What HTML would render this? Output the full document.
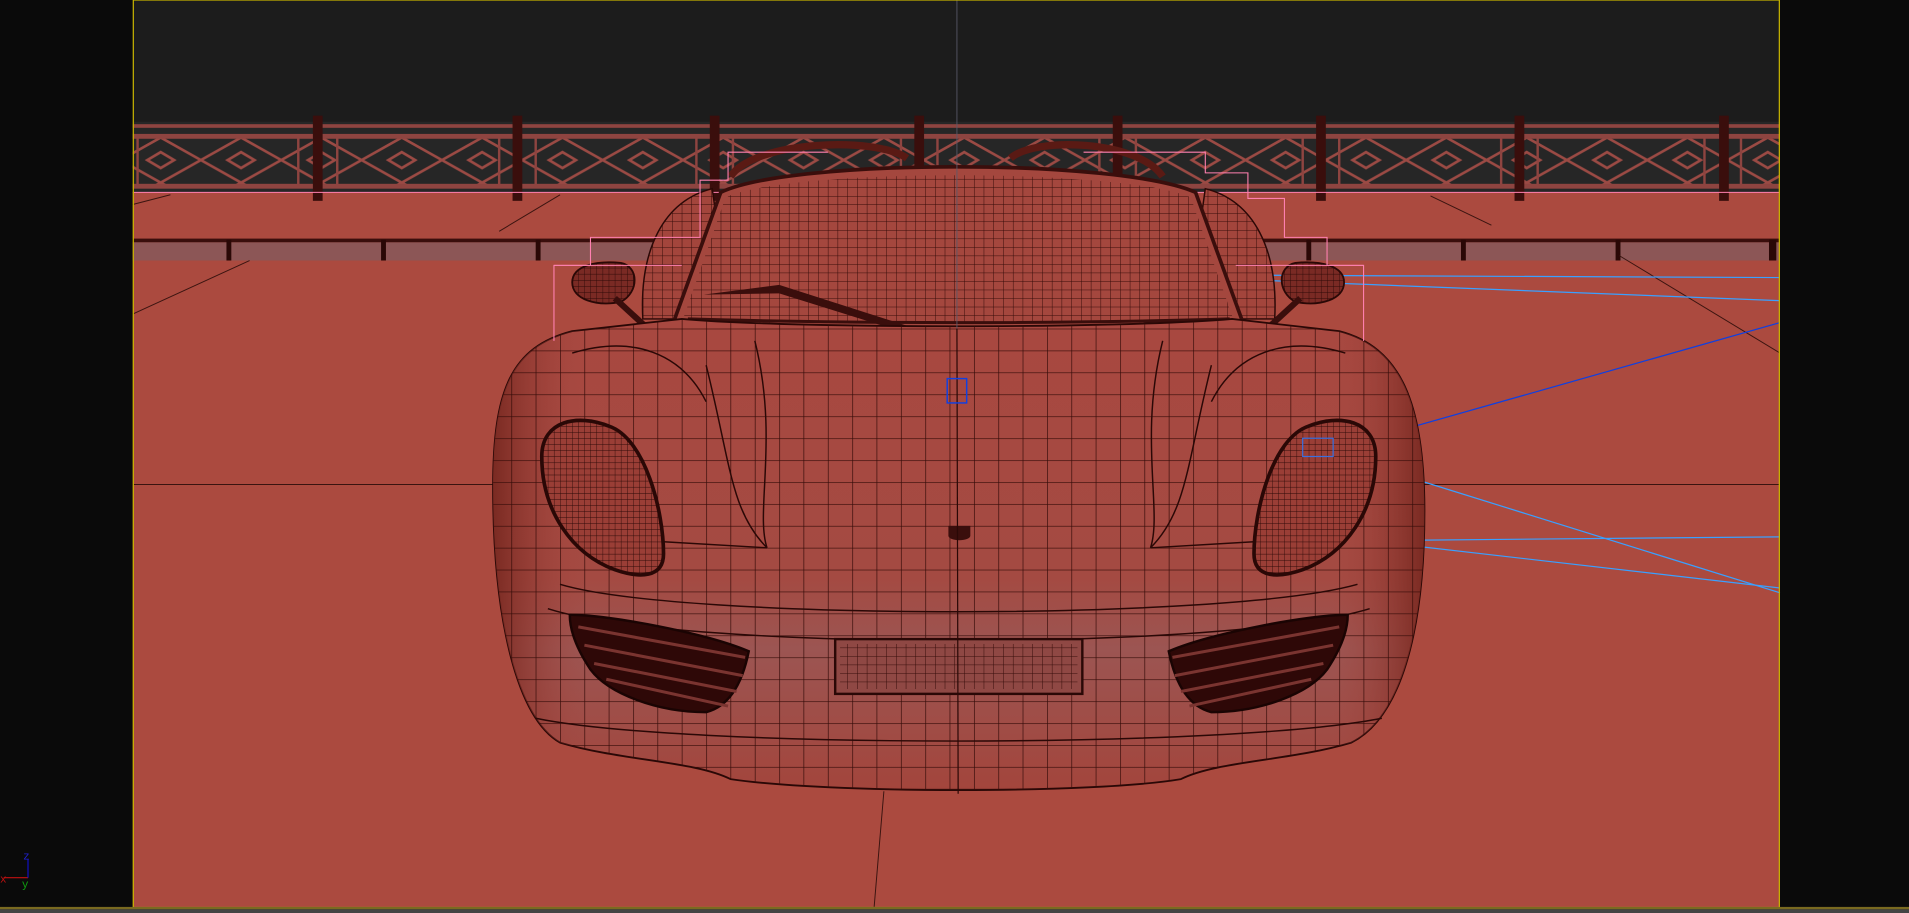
<!DOCTYPE html>
<html><head><meta charset="utf-8"><style>
html,body{margin:0;padding:0;background:#0a0a0a;width:1909px;height:913px;overflow:hidden}
svg{display:block}
</style></head><body>
<svg width="1909" height="913" viewBox="0 0 1568 750" preserveAspectRatio="none" xmlns="http://www.w3.org/2000/svg">
<defs>
<pattern id="mesh" width="20" height="18" patternUnits="userSpaceOnUse">
<path d="M0 0H20M0 0V18" stroke="#340b08" stroke-width="1.1" fill="none"/>
</pattern>
<pattern id="fine" width="8" height="7" patternUnits="userSpaceOnUse">
<path d="M0 0H8M0 0V7" stroke="#340b08" stroke-width="0.8" fill="none"/>
</pattern>
<pattern id="vfine" width="5" height="5" patternUnits="userSpaceOnUse">
<path d="M0 0H5M0 0V5" stroke="#2a0806" stroke-width="0.7" fill="none"/>
</pattern>
<pattern id="lattice" width="66" height="37" patternUnits="userSpaceOnUse" x="33" y="113">
<path d="M0 18.5L33 0L66 18.5L33 37Z M22 18.5L33 12L44 18.5L33 25Z" stroke="#9b4a44" stroke-width="2.2" fill="none"/>
</pattern>
<linearGradient id="shade" x1="0" y1="0" x2="0" y2="1">
<stop offset="0" stop-color="#a84840"/><stop offset="0.55" stop-color="#a44a42"/><stop offset="0.7" stop-color="#9c5552"/><stop offset="1" stop-color="#a3453c"/>
</linearGradient>
<linearGradient id="side" x1="0" y1="0" x2="1" y2="0">
<stop offset="0" stop-color="#7a2a22"/><stop offset="0.1" stop-color="#a84840" stop-opacity="0"/><stop offset="0.9" stop-color="#a84840" stop-opacity="0"/><stop offset="1" stop-color="#7a2a22"/>
</linearGradient>
</defs>
<rect x="0" y="0" width="1568" height="750" fill="#0a0a0a"/>
<rect x="109" y="0" width="1353" height="160" fill="#1c1c1c"/>
<rect x="109" y="100" width="1353" height="60" fill="#262626"/>
<rect x="109" y="158" width="1353" height="588" fill="#ab4a3f"/>
<!-- fence -->
<rect x="109" y="112" width="1353" height="40" fill="url(#lattice)"/>
<rect x="109" y="102" width="1353" height="3" fill="#8e4440"/>
<rect x="109" y="110" width="1353" height="4" fill="#8e4440"/>
<rect x="109" y="151" width="1353" height="4" fill="#8e4440"/>
<g stroke="#8e4440" stroke-width="2">
<path d="M113 112V152M245 112V152M277 112V152M410 112V152M440 112V152M572 112V152M602 112V152M740 112V152M770 112V152M903 112V152M933 112V152M1070 112V152M1100 112V152M1233 112V152M1263 112V152M1400 112V152M1430 112V152"/>
</g>
<g fill="#3a0e0c">
<rect x="257" y="95" width="8" height="70"/><rect x="421" y="95" width="8" height="70"/><rect x="583" y="95" width="8" height="70"/><rect x="751" y="95" width="8" height="70"/><rect x="914" y="95" width="8" height="70"/><rect x="1081" y="95" width="8" height="70"/><rect x="1244" y="95" width="8" height="70"/><rect x="1412" y="95" width="8" height="70"/>
</g>
<line x1="109" y1="158" x2="1462" y2="158" stroke="#ff80b0" stroke-width="0.8"/>
<rect x="109" y="199" width="1353" height="15" fill="#8c5656"/>
<rect x="109" y="196" width="1353" height="3" fill="#3a0e0c"/>
<g fill="#2a0806"><rect x="186" y="197" width="4" height="17"/><rect x="313" y="197" width="4" height="17"/><rect x="440" y="197" width="4" height="17"/><rect x="1073" y="197" width="4" height="17"/><rect x="1200" y="197" width="4" height="17"/><rect x="1327" y="197" width="4" height="17"/><rect x="1453" y="197" width="6" height="17"/></g>
<g stroke="#3a1410" stroke-width="0.8" fill="none">
<line x1="109" y1="168" x2="140" y2="160"/><line x1="109" y1="258" x2="205" y2="214"/>
<line x1="1175" y1="161" x2="1225" y2="185"/><line x1="1330" y1="210" x2="1462" y2="290"/>
<line x1="109" y1="398" x2="405" y2="398"/><line x1="1170" y1="398" x2="1462" y2="398"/>
<line x1="726" y1="650" x2="718" y2="745"/><line x1="410" y1="190" x2="460" y2="160"/>
</g>
<g stroke="#3aa0ff" stroke-width="1" fill="none">
<line x1="1010" y1="226" x2="1462" y2="228"/><line x1="1030" y1="230" x2="1462" y2="247"/>
<line x1="1080" y1="368" x2="1462" y2="487"/><line x1="1135" y1="444" x2="1462" y2="441"/><line x1="1140" y1="446" x2="1462" y2="483"/>
</g>
<line x1="1085" y1="372" x2="1462" y2="265" stroke="#1040e0" stroke-width="1"/>
<!-- rear fenders -->
<path d="M528 262C525 205 545 165 585 155L600 262Z" fill="#a3453c" stroke="#2a0806" stroke-width="1.2"/>
<path d="M528 262C525 205 545 165 585 155L600 262Z" fill="url(#fine)"/>
<path d="M1047 262C1050 205 1030 165 990 155L975 262Z" fill="#a3453c" stroke="#2a0806" stroke-width="1.2"/>
<path d="M1047 262C1050 205 1030 165 990 155L975 262Z" fill="url(#fine)"/>
<path d="M600 145C620 115 720 112 745 130" stroke="#5a1a14" stroke-width="6" fill="none"/>
<path d="M830 130C850 112 935 115 955 145" stroke="#5a1a14" stroke-width="6" fill="none"/>
<!-- windshield -->
<path d="M552 268L592 158C650 130 920 130 982 158L1022 268C900 275 680 275 552 268Z" fill="#a4473e" stroke="#3a0e0c" stroke-width="3"/>
<path d="M560 265L596 162C650 138 920 138 978 162L1014 265Z" fill="url(#fine)"/>
<path d="M565 262C700 266 880 266 1010 262" stroke="#3a0e0c" stroke-width="2.5" fill="none"/>
<path d="M578 242L640 234L765 274L752 276L640 241Z" fill="#3a0e0c"/>
<g fill="#7a2a24" stroke="#2a0806" stroke-width="1.5">
<path d="M470 232C470 218 490 214 510 216C525 219 525 240 510 248C490 252 470 246 470 232Z"/>
<path d="M1104 232C1104 218 1084 214 1064 216C1049 219 1049 240 1064 248C1084 252 1104 246 1104 232Z"/>
</g>
<path d="M470 232C470 218 490 214 510 216C525 219 525 240 510 248C490 252 470 246 470 232Z" fill="url(#vfine)"/>
<path d="M1104 232C1104 218 1084 214 1064 216C1049 219 1049 240 1064 248C1084 252 1104 246 1104 232Z" fill="url(#vfine)"/>
<path d="M505 245L530 268M1068 245L1043 268" stroke="#3a0e0c" stroke-width="5"/>
<!-- body -->
<path d="M405 400C405 320 420 285 470 272L560 262C650 270 920 270 1012 262L1100 272C1150 285 1170 330 1170 420C1170 520 1150 590 1110 610C1060 625 1000 625 970 640C900 652 680 652 600 640C570 625 510 625 460 610C425 590 405 510 405 400Z" fill="url(#shade)" stroke="#2a0806" stroke-width="1.5"/>
<path d="M405 400C405 320 420 285 470 272L560 262C650 270 920 270 1012 262L1100 272C1150 285 1170 330 1170 420C1170 520 1150 590 1110 610C1060 625 1000 625 970 640C900 652 680 652 600 640C570 625 510 625 460 610C425 590 405 510 405 400Z" fill="url(#side)"/>
<path d="M405 400C405 320 420 285 470 272L560 262C650 270 920 270 1012 262L1100 272C1150 285 1170 330 1170 420C1170 520 1150 590 1110 610C1060 625 1000 625 970 640C900 652 680 652 600 640C570 625 510 625 460 610C425 590 405 510 405 400Z" fill="url(#mesh)"/>
<g stroke="#2a0806" stroke-width="1.2" fill="none">
<path d="M460 480C560 510 1010 510 1115 480"/>
<path d="M450 500C560 535 1010 535 1125 500"/>
<path d="M440 590C560 615 1010 615 1135 590"/>
<path d="M470 290C520 275 560 290 580 330M1105 290C1055 275 1015 290 995 330"/>
<path d="M620 280C640 360 620 420 630 450M955 280C935 360 955 420 945 450"/>
<path d="M580 300C600 380 600 420 630 450M995 300C975 380 975 420 945 450"/>
<path d="M545 445L630 450M1030 445L945 450"/>
</g>
<g stroke="#2a0806" stroke-width="3">
<path d="M445 375C445 345 475 340 500 350C530 360 545 420 545 455C545 475 525 475 505 468C470 455 445 420 445 375Z" fill="#9a3e36"/>
<path d="M1130 375C1130 345 1100 340 1075 350C1045 360 1030 420 1030 455C1030 475 1050 475 1070 468C1105 455 1130 420 1130 375Z" fill="#9a3e36"/>
</g>
<path d="M445 375C445 345 475 340 500 350C530 360 545 420 545 455C545 475 525 475 505 468C470 455 445 420 445 375Z" fill="url(#vfine)"/>
<path d="M1130 375C1130 345 1100 340 1075 350C1045 360 1030 420 1030 455C1030 475 1050 475 1070 468C1105 455 1130 420 1130 375Z" fill="url(#vfine)"/>
<path d="M468 505C500 505 580 520 615 535C610 560 600 580 580 585C540 585 500 570 485 550C475 535 468 520 468 505Z" fill="#2e0807" stroke="#1a0403" stroke-width="2"/>
<path d="M1107 505C1075 505 995 520 960 535C965 560 975 580 995 585C1035 585 1075 570 1090 550C1100 535 1107 520 1107 505Z" fill="#2e0807" stroke="#1a0403" stroke-width="2"/>
<g stroke="#7a3430" stroke-width="2.5">
<path d="M475 515L612 540M480 530L610 555M488 545L605 568M498 558L598 580"/>
<path d="M1100 515L963 540M1095 530L965 555M1087 545L970 568M1077 558L977 580"/>
</g>
<rect x="686" y="525" width="203" height="45" fill="#8f4844" stroke="#2a0806" stroke-width="2"/>
<rect x="690" y="529" width="195" height="37" fill="url(#fine)"/>
<path d="M779 432H797V440C797 445 779 445 779 440Z" fill="#3a0e0c"/>
<line x1="786" y1="0" x2="786" y2="270" stroke="#5a5a6a" stroke-width="0.7"/>
<line x1="786" y1="270" x2="787" y2="652" stroke="#2a0806" stroke-width="1"/>
<rect x="778" y="311" width="16" height="20" fill="none" stroke="#1040e0" stroke-width="1.2"/>
<rect x="1070" y="360" width="25" height="15" fill="none" stroke="#3a70e0" stroke-width="1"/>
<g stroke="#ff80b0" stroke-width="0.9" fill="none">
<path d="M455 280V218H485V195H575V148H598V125H680"/>
<path d="M1120 280V218H1090V195H1055V163H1025V142H990V125H890"/>
<path d="M455 218H560M1015 218H1120"/>
</g>
<rect x="109.5" y="0" width="1352" height="745.5" fill="none" stroke="#c8b400" stroke-width="1"/>
<rect x="0" y="745" width="1568" height="2" fill="#7a6a20"/>
<rect x="0" y="747" width="1568" height="3" fill="#444"/>
<line x1="3" y1="721" x2="23" y2="721" stroke="#c01010" stroke-width="1"/>
<line x1="23" y1="721" x2="23" y2="706" stroke="#1010c0" stroke-width="1"/>
<text x="19" y="706" font-family="Liberation Mono, monospace" font-size="9" fill="#2020d0">z</text>
<text x="0" y="725" font-family="Liberation Mono, monospace" font-size="9" fill="#c01010">x</text>
<text x="18" y="729" font-family="Liberation Mono, monospace" font-size="9" fill="#10a010">y</text>
</svg>
</body></html>
